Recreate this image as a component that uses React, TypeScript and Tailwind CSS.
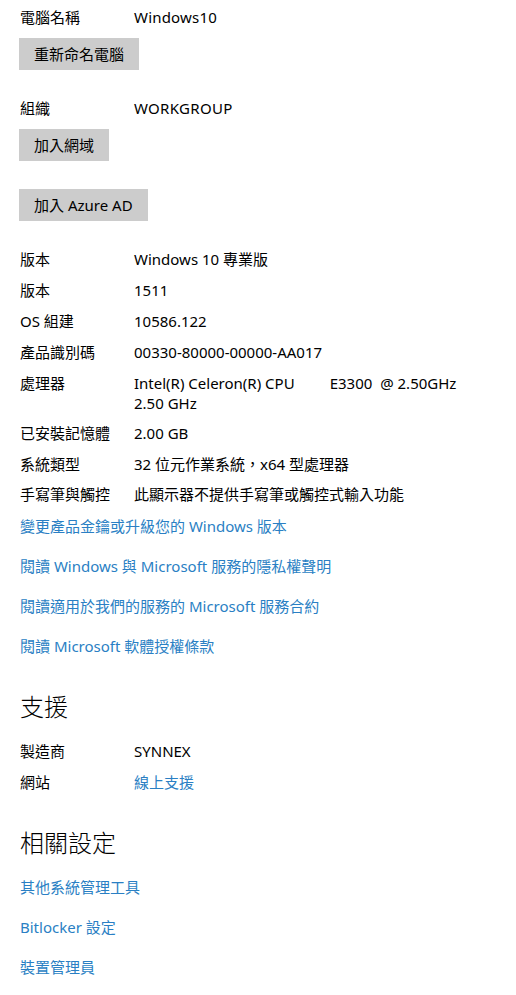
import React from 'react';

const font = {
    fontFamily: '"Noto Sans", "Noto Sans CJK TC", sans-serif',
};

function InfoRow({ label, children, gap = 'mt-[11px]' }: { label: string; children: React.ReactNode; gap?: string }) {
    return (
        <div className={`flex text-[15px] leading-[20px] text-black ${gap}`}>
            <div className="w-[114px] shrink-0">{label}</div>
            <div className="flex-1">{children}</div>
        </div>
    );
}

function GrayButton({ children, className = '' }: { children: React.ReactNode; className?: string }) {
    return (
        <button
            type="button"
            className={`h-[32px] bg-[#cccccc] px-[15px] text-[15px] leading-[20px] text-black ${className}`}
        >
            {children}
        </button>
    );
}

function LinkRow({ children, className = 'mt-[20px]' }: { children: React.ReactNode; className?: string }) {
    return (
        <div className={`text-[15px] leading-[20px] text-[#2a7fc4] ${className}`}>
            <a href="#" onClick={(e) => e.preventDefault()}>{children}</a>
        </div>
    );
}

export default function App() {
    return (
        <div className="min-h-[995px] w-[516px] bg-white pl-[20px] pt-[7px]" style={font}>
            {/* 電腦名稱 */}
            <div className="flex text-[15px] leading-[20px] text-black">
                <div className="w-[114px] shrink-0">電腦名稱</div>
                <div className="tracking-[0.2px]">Windows10</div>
            </div>
            <div className="mt-[11px] flex">
                <GrayButton className="-ml-px">重新命名電腦</GrayButton>
            </div>

            <InfoRow label="組織" gap="mt-[28px]"><span className="tracking-[0.3px]">WORKGROUP</span></InfoRow>
            <div className="mt-[11px] flex">
                <GrayButton className="-ml-px">加入網域</GrayButton>
            </div>
            <div className="mt-[28px] flex">
                <GrayButton className="-ml-px">加入 Azure AD</GrayButton>
            </div>

            {/* 規格 */}
            <InfoRow label="版本" gap="mt-[28px]">Windows 10 專業版</InfoRow>
            <InfoRow label="版本">1511</InfoRow>
            <InfoRow label="OS 組建">10586.122</InfoRow>
            <InfoRow label="產品識別碼">00330-80000-00000-AA017</InfoRow>
            <InfoRow label="處理器" gap="mt-[11px]">
                <div className="whitespace-pre">Intel(R) Celeron(R) CPU         E3300  @ 2.50GHz</div>
                <div>2.50 GHz</div>
            </InfoRow>
            <InfoRow label="已安裝記憶體" gap="mt-[10px]">2.00 GB</InfoRow>
            <InfoRow label="系統類型">32 位元作業系統，x64 型處理器</InfoRow>
            <InfoRow label="手寫筆與觸控" gap="mt-[10px]">此顯示器不提供手寫筆或觸控式輸入功能</InfoRow>

            <LinkRow className="mt-[12px]">變更產品金鑰或升級您的 Windows 版本</LinkRow>
            <LinkRow>閱讀 Windows 與 Microsoft 服務的隱私權聲明</LinkRow>
            <LinkRow>閱讀適用於我們的服務的 Microsoft 服務合約</LinkRow>
            <LinkRow>閱讀 Microsoft 軟體授權條款</LinkRow>

            {/* 支援 */}
            <h2 className="mt-[35px] text-[24px] leading-[32px] font-light text-black">支援</h2>
            <div className="mt-[18px] flex text-[15px] leading-[20px] text-black">
                <div className="w-[114px] shrink-0">製造商</div>
                <div>SYNNEX</div>
            </div>
            <div className="mt-[11px] flex text-[15px] leading-[20px] text-black">
                <div className="w-[114px] shrink-0">網站</div>
                <a href="#" onClick={(e) => e.preventDefault()} className="text-[#2a7fc4]">線上支援</a>
            </div>

            {/* 相關設定 */}
            <h2 className="mt-[35px] text-[24px] leading-[32px] font-light text-black">相關設定</h2>
            <LinkRow className="mt-[18px]">其他系統管理工具</LinkRow>
            <LinkRow>Bitlocker 設定</LinkRow>
            <LinkRow>裝置管理員</LinkRow>
        </div>
    );
}
